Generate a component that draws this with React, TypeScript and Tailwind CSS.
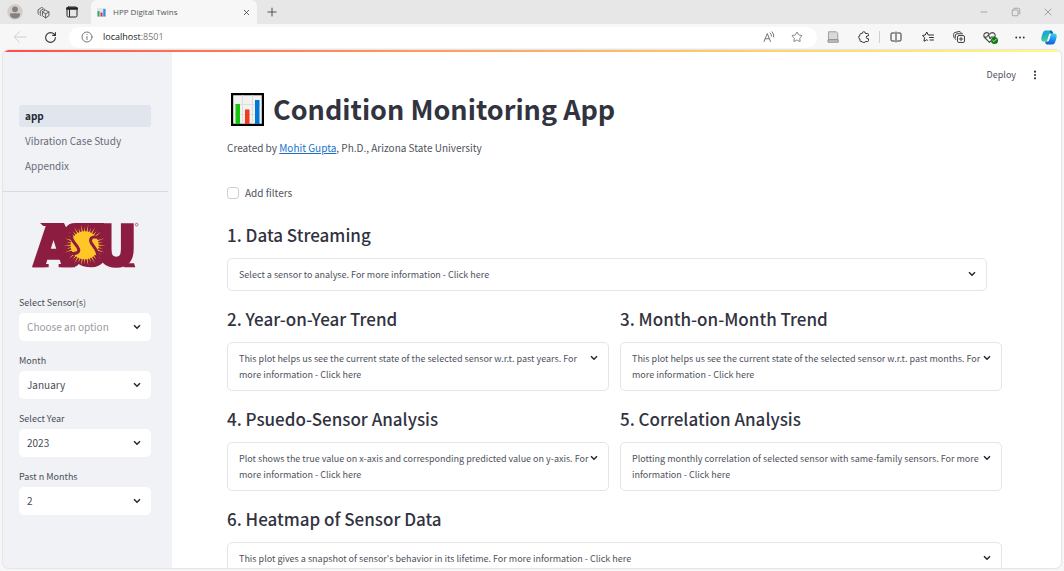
import type { ReactNode } from 'react';
import { Check, Minus, Plus, RotateCw, Star, X } from 'lucide-react';

const RAYS = Array.from({ length: 36 }, (_, i) => {
  const a = (i * Math.PI) / 18;
  const d = 0.065;
  const p = (r: number, t: number) => `${(170 + r * Math.cos(t)).toFixed(1)},${(82 + r * Math.sin(t)).toFixed(1)}`;
  return `M${p(34, a - d)}L${p(i % 2 ? 56 : 63, a)}L${p(34, a + d)}Z`;
}).join('');

function AsuLogo() {
  return (
    <svg viewBox="0 0 348 168" className="h-14 w-[116px] overflow-visible" role="img" aria-label="ASU">
      <g fill="#8c1d40" stroke="#8c1d40" fontWeight="700" fontFamily="Liberation Sans Narrow, DejaVu Sans Condensed, sans-serif" fontSize="168" strokeWidth="10">
        <text x="18" y="142">A</text>
        <text x="203" y="141">U</text>
        <path d="M36 15H108L114 28Q122 15 142 15H228V130Q214 148 190 148Q166 148 152 138Q146 148 128 148H108V70L86 24H46Z M15 138H62V148H15Z M92 138H134V148H92Z M296 136H318L322 148H286Z" stroke="none" />
      </g>
      <path d={RAYS} fill="#ffc627" />
      <circle cx="170" cy="82" r="42" fill="#ffc627" />
      <path
        d="M220 60C198 54 186 56 188 70C192 86 218 96 206 132M120 104C142 110 154 104 152 94C148 78 122 70 132 34"
        fill="none"
        stroke="#8c1d40"
        strokeWidth="9"
      />
      <circle cx="326" cy="20" r="4" fill="none" stroke="#b0667e" strokeWidth="3" />
    </svg>
  );
}

function ChartIcon({ className }: { className: string }) {
  return (
    <svg viewBox="0 0 33 33" className={className} aria-hidden="true">
      <path d="M1 1H32V32H1Z" fill="#f2f2f2" stroke="#000" strokeWidth="2.4" />
      <path d="M11.500 2V31M21.500 2V31M2 11.500H31M2 21.500H31" stroke="#dedede" strokeWidth="1" />
      <path d="M4.500 11H9V31H4.500Z" fill="#16c60c" />
      <path d="M14 16.500H18.500V31H14Z" fill="#f03a17" />
      <path d="M24 7H28.500V31H24Z" fill="#0078d7" />
    </svg>
  );
}

function Favicon() {
  return (
    <svg viewBox="0 0 18 18" className="size-[9px]" aria-hidden="true">
      <path d="M0 0H18V18H0Z" fill="#dfe6ea" />
      <path d="M1 6H5V17H1Z" fill="#3aa565" />
      <path d="M7 9H11V17H7Z" fill="#d5344f" />
      <path d="M12.500 2H17V17H12.500Z" fill="#3a8ee0" />
    </svg>
  );
}

function Chevron({ className = '' }: { className?: string }) {
  return (
    <svg viewBox="0 0 8 8" className={`size-2 shrink-0 ${className}`} fill="none" stroke="#262730" strokeWidth="1.500" aria-hidden="true">
      <path d="M1 2.300L4 5.300L7 2.300" />
    </svg>
  );
}

function IconButton({ label, className, children }: { label: string; className: string; children: ReactNode }) {
  return (
    <button type="button" aria-label={label} className={`flex shrink-0 items-center justify-center ${className}`}>
      {children}
    </button>
  );
}

function LineIcon({ children, className = 'size-3 text-[#444]' }: { children: ReactNode; className?: string }) {
  return (
    <svg viewBox="0 0 24 24" className={className} fill="none" stroke="currentColor" strokeWidth="2" strokeLinecap="round" strokeLinejoin="round" aria-hidden="true">
      {children}
    </svg>
  );
}

function TitleBar() {
  return (
    <div className="flex h-6 shrink-0 items-stretch bg-[#e7e7e7] text-[#555]">
      <IconButton label="Profile" className="w-[30px]">
        <svg viewBox="0 0 30 30" className="size-4" aria-hidden="true">
          <circle cx="15" cy="15" r="14.500" fill="#d0cdca" />
          <circle cx="15" cy="10" r="5.500" fill="#85807c" />
          <path d="M5.500 20Q5.500 17.500 8 17.500H22Q24.500 17.500 24.500 20Q23 27 15 27T5.500 20Z" fill="#85807c" />
        </svg>
      </IconButton>
      <IconButton label="Workspaces" className="w-[27px]">
        <LineIcon className="size-[13px] text-[#555]">
          <path d="M16 8L22 11V18L16 22L10 18V11ZM10 11L16 14.500L22 11M16 14.500V22" strokeWidth="1.700" />
          <path d="M6.500 18L6 17V9L12 5.500L14 6M2.500 15L2 14V7L8 3L10.500 3.500" strokeWidth="1.700" />
        </LineIcon>
      </IconButton>
      <IconButton label="Tab actions" className="w-[30px]">
        <LineIcon className="size-3 text-[#222]">
          <rect x="2" y="2" width="20" height="20" rx="3" />
          <path d="M2.500 5H21.500" strokeWidth="5" />
          <path d="M7 6V21" />
        </LineIcon>
      </IconButton>
      <div className="ml-1 flex w-[166px] items-center rounded-t-md bg-[#f7f7f7] pr-[5px] pl-1.5">
        <Favicon />
        <span className="ml-[7px] flex-1 text-[8px]">HPP Digital Twins</span>
        <IconButton label="Close tab" className="size-3">
          <X className="size-[9px] text-[#333]" />
        </IconButton>
      </div>
      <IconButton label="New tab" className="w-[30px]">
        <Plus className="size-[14px]" strokeWidth={1.8} />
      </IconButton>
      <div className="ml-auto flex text-[#999]">
        <IconButton label="Minimize" className="w-8">
          <Minus className="size-2.5" />
        </IconButton>
        <IconButton label="Restore" className="w-8">
          <LineIcon className="size-2.5">
            <rect x="3" y="7" width="14" height="14" rx="2" />
            <path d="M7 3H18Q21 3 21 6V17" />
          </LineIcon>
        </IconButton>
        <IconButton label="Close" className="w-8">
          <X className="size-3" strokeWidth={1.800} />
        </IconButton>
      </div>
    </div>
  );
}

function ToolBar() {
  return (
    <div className="flex h-[26px] shrink-0 items-center text-[#444]">
      <IconButton label="Back" className="ml-1 w-[31px]">
        <LineIcon className="size-[14px] text-[#cfcfcf]">
          <path d="M22 12H3M11 3L2 12L11 21" strokeWidth="1.700" />
        </LineIcon>
      </IconButton>
      <IconButton label="Reload" className="w-[30px]">
        <RotateCw className="size-[13px] text-[#333]" />
      </IconButton>
      <div className="ml-1 flex h-[21px] flex-1 items-center rounded-full bg-white pl-3">
        <LineIcon className="size-3 text-[#777]">
          <circle cx="12" cy="12" r="10" />
          <path d="M12 11V17M12 7V7.200" />
        </LineIcon>
        <a href="http://localhost:8501" className="ml-2.5 flex-1 text-[9px] text-[#222]">
          localhost<span className="text-[#777]">:8501</span>
        </a>
        <IconButton label="Read aloud" className="w-7">
          <LineIcon className="size-3 text-[#777]">
            <path d="M2 21L8.500 5L15 21M4.500 15.500H12.500" />
            <path d="M14.500 4Q17.500 6.500 17 10.500M18 1.500Q22.500 5.500 21.500 12" />
          </LineIcon>
        </IconButton>
        <IconButton label="Add to favorites" className="mr-1.5 w-7">
          <Star className="size-3 text-[#777]" strokeWidth={1.800} />
        </IconButton>
      </div>
      <IconButton label="Reader" className="w-[31px]">
        <svg viewBox="0 0 24 24" className="size-3" aria-hidden="true">
          <path d="M3 1.500H18.500L21.500 4.500V17H3Z" fill="#d9d9d9" stroke="#999" strokeWidth="1.800" />
          <path d="M2 17.500H22.500V22.500H2Z" fill="#c4c4c4" stroke="#8c8c8c" strokeWidth="1.800" />
        </svg>
      </IconButton>
      <IconButton label="Extensions" className="w-[31px]">
        <LineIcon className="size-3 text-[#333]">
          <path d="M8 5Q8 1.500 11.500 1.500T15 5H19Q21 5 21 7V9.500Q16.500 9 16.500 12.500T21 15.500V19Q21 21 19 21H15Q15 23 11.500 23T8 21H6Q4 21 4 19V16Q1.500 16 1.500 12.500T4 9V7Q4 5 6 5Z" />
        </LineIcon>
      </IconButton>
      <span className="h-3 w-px bg-[#d0d0d0]" />
      <IconButton label="Split screen" className="w-8">
        <LineIcon className="size-3 text-[#333]">
          <path d="M9 4H4Q2 4 2 6V18Q2 20 4 20H9M15 4H20Q22 4 22 6V18Q22 20 20 20H15M12 2V22" />
        </LineIcon>
      </IconButton>
      <IconButton label="Favorites" className="w-[31px]">
        <LineIcon className="size-3 text-[#333]">
          <path d="M15 8H12.500L9.500 2L6.500 8L1 9L5 13.500L4 20.500L9.500 17.500L11 18.500M16 8H23M15 13H23M16 18H23" />
        </LineIcon>
      </IconButton>
      <IconButton label="Collections" className="w-[31px]">
        <LineIcon>
          <rect x="9" y="9" width="14" height="14" rx="3" />
          <path d="M16 12.500V19.500M12.500 16H19.500M5.500 17Q4 17 4 15L5 8Q5.500 5.500 8 5.500H19M2 13L1 7Q1 4 4 3L12 1Q15 1 16 3" />
        </LineIcon>
      </IconButton>
      <IconButton label="Browser essentials" className="w-[31px]">
        <span className="relative flex">
          <LineIcon className="size-[13px] text-[#444]">
            <path d="M12 21L3 12Q0 8 3 4.500Q8 1 12 6Q16 1 21 4.500Q24 8 21 12ZM2 11H7L10 7L13 14L15.500 11H22" />
          </LineIcon>
          <span className="absolute -right-0.5 bottom-0 flex size-[7px] items-center justify-center rounded-full bg-[#107c10]">
            <Check className="size-[5px] text-white" strokeWidth={4} />
          </span>
        </span>
      </IconButton>
      <IconButton label="Settings and more" className="w-[29px]">
        <svg viewBox="0 0 24 6" className="h-[3px] w-2.5" fill="#333" aria-hidden="true">
          <circle cx="3" cy="3" r="2.300" />
          <circle cx="12" cy="3" r="2.300" />
          <circle cx="21" cy="3" r="2.300" />
        </svg>
      </IconButton>
      <IconButton label="Copilot" className="w-[30px]">
        <svg viewBox="0 0 48 44" className="h-[15px] w-4" aria-hidden="true">
          <defs>
            <linearGradient id="copilotLeft" x1="0" y1="0" x2="0.300" y2="1">
              <stop offset="0" stopColor="#1aa0e8" />
              <stop offset="0.550" stopColor="#1fb4c0" />
              <stop offset="1" stopColor="#4fd08a" />
            </linearGradient>
            <linearGradient id="copilotRight" x1="0.600" y1="0" x2="0.300" y2="1">
              <stop offset="0" stopColor="#35d0e8" />
              <stop offset="0.500" stopColor="#1f8cf0" />
              <stop offset="1" stopColor="#1557d8" />
            </linearGradient>
          </defs>
          <path d="M14 1H30Q34 1 35 6L36 10H28Q25 10 24 14L19 31Q18 34 14 34H8Q0 34 1 24Q3 12 7 5Q10 1 14 1Z" fill="url(#copilotLeft)" />
          <path d="M34 43H18Q14 43 13 38L12 34H20Q23 34 24 30L29 13Q30 10 34 10H40Q48 10 47 20Q45 32 41 39Q38 43 34 43Z" fill="url(#copilotRight)" />
          <path d="M27 13L21 32" stroke="#f7f7f7" strokeWidth="4" />
          <path d="M27 1Q33 1 35 6L36 10H29Q27 4 27 1Z" fill="#174fb8" />
        </svg>
      </IconButton>
    </div>
  );
}

const FIELDS = [
  { id: 'sensor', label: 'Select Sensor(s)', value: 'Choose an option', tone: 'text-[#9a9ba2]' },
  { id: 'month', label: 'Month', value: 'January', tone: 'text-[#4a4c57]' },
  { id: 'year', label: 'Select Year', value: '2023', tone: 'text-[#4a4c57]' },
  { id: 'past', label: 'Past n Months', value: '2', tone: 'text-[#4a4c57]' },
];

function SideBar() {
  return (
    <aside className="w-[169px] shrink-0 bg-[#f0f2f6]">
      <nav className="flex flex-col gap-[3px] pt-[55px] pr-[21px] pb-[14px] pl-4 text-[10px] leading-[22px] text-[#6a6c76]">
        <a href="#app" aria-current="page" className="rounded-[3px] bg-[#e1e6ee] pl-1.5 font-bold text-[#262730]">app</a>
        <a href="#vibration" className="pl-1.5">Vibration Case Study</a>
        <a href="#appendix" className="pl-1.5">Appendix</a>
      </nav>
      <hr className="mr-1 border-[#d9dae0]" />
      <div className="pt-[26px] pr-[21px] pl-4">
        <div className="flex pl-[9px]">
          <AsuLogo />
        </div>
        <form className="mt-[22px] flex flex-col gap-[13px]">
          {FIELDS.map((f) => (
            <div key={f.id} className="flex flex-col gap-[3px]">
              <label htmlFor={f.id} className="text-[9px] leading-[14px] text-[#4a4c57]">{f.label}</label>
              <div className="relative flex items-center">
                <select id={f.id} className={`h-7 w-full appearance-none rounded-[5px] bg-white px-2 pb-0.5 text-[10px] ${f.tone}`}>
                  <option>{f.value}</option>
                </select>
                <Chevron className="pointer-events-none absolute right-[10px]" />
              </div>
            </div>
          ))}
        </form>
      </div>
    </aside>
  );
}

function Section({ title, text, className = '' }: { title: string; text: string; className?: string }) {
  return (
    <section className={className}>
      <h2 className="text-[17px] leading-5 font-medium">{title}</h2>
      <details className="mt-[13px] rounded-[5px] border border-[#e4e5e8]">
        <summary className="flex cursor-pointer list-none pt-2 pr-[10px] pb-[7px] pl-[11px] text-[9px] leading-4 text-[#50525c]">
          <span className="flex-1">{text}</span>
          <Chevron className="mt-[3px]" />
        </summary>
      </details>
    </section>
  );
}

function MainPanel() {
  return (
    <main className="min-w-0 flex-1 overflow-hidden bg-white text-[#31333f]">
      <header className="flex items-center justify-end pt-[17px] pr-[22px] text-[9px] leading-4 text-[#50525c]">
        <button type="button">Deploy</button>
        <button type="button" aria-label="Main menu" className="ml-[15px] flex w-2 justify-center">
          <svg viewBox="0 0 4 12" className="h-[10px] w-[4px]" fill="#31333f" aria-hidden="true">
            <circle cx="2" cy="2" r="1.300" />
            <circle cx="2" cy="6" r="1.300" />
            <circle cx="2" cy="10" r="1.300" />
          </svg>
        </button>
      </header>
      <div className="pt-[9px] pr-[59px] pl-[55px]">
        <h1 className="flex items-center gap-[9px] pl-1 text-[27px] leading-[34px] font-bold">
          <ChartIcon className="size-[33px]" />
          Condition Monitoring App
        </h1>
        <p className="mt-[14px] text-[10px] leading-4 text-[#50525c]">
          Created by <a href="#mohit-gupta" className="text-[#1a73c8] underline">Mohit Gupta</a>, Ph.D., Arizona State University
        </p>
        <label className="mt-[29px] flex items-center gap-1.5 text-[10px] leading-4 text-[#50525c]">
          <input type="checkbox" className="size-3 appearance-none rounded-[3px] border border-[#cfd0d4] bg-white checked:bg-[#ff4b4b]" />
          Add filters
        </label>
        <div className="mt-6 grid grid-cols-2 gap-x-[11px] gap-y-[18px]">
          <Section className="col-span-2 mr-[15px]" title="1. Data Streaming" text="Select a sensor to analyse. For more information - Click here" />
          <Section title="2. Year-on-Year Trend" text="This plot helps us see the current state of the selected sensor w.r.t. past years. For more information - Click here" />
          <Section title="3. Month-on-Month Trend" text="This plot helps us see the current state of the selected sensor w.r.t. past months. For more information - Click here" />
          <Section title="4. Psuedo-Sensor Analysis" text="Plot shows the true value on x-axis and corresponding predicted value on y-axis. For more information - Click here" />
          <Section title="5. Correlation Analysis" text="Plotting monthly correlation of selected sensor with same-family sensors. For more information - Click here" />
          <Section className="col-span-2" title="6. Heatmap of Sensor Data" text="This plot gives a snapshot of sensor's behavior in its lifetime. For more information - Click here" />
        </div>
      </div>
    </main>
  );
}

export default function App() {
  return (
    <div className="flex h-screen flex-col overflow-hidden bg-[#f7f7f7] font-['Open_Sans',sans-serif]">
      <TitleBar />
      <ToolBar />
      <div className="relative mr-[3px] mb-[3px] ml-[3px] flex min-h-0 flex-1 overflow-hidden rounded-md font-['Noto_Sans_CJK_SC',sans-serif] shadow-[0_0_2px_rgba(0,0,0,0.25)]">
        <div className="absolute inset-x-0 top-0 h-0.5 bg-linear-to-r from-[#ff4b4b] to-[#fffd80]" />
        <SideBar />
        <MainPanel />
      </div>
    </div>
  );
}
